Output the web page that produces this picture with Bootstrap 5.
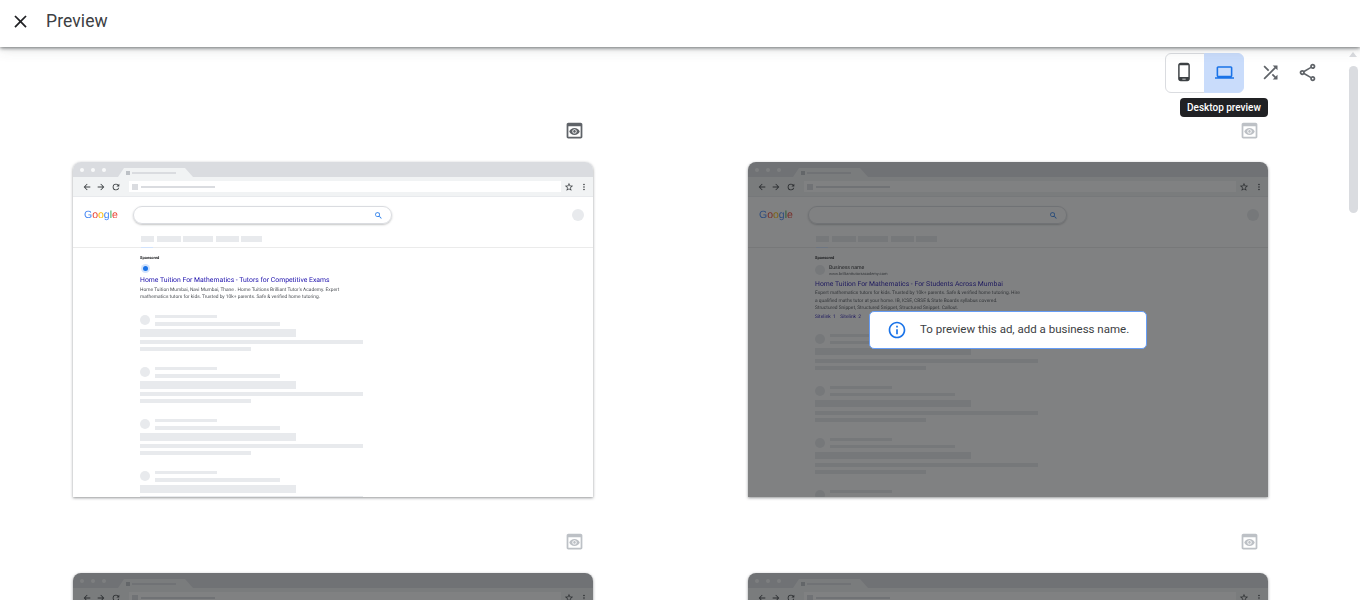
<!DOCTYPE html>
<html lang="en">

<head>
    <meta charset="UTF-8">
    <meta name="viewport" content="width=device-width, initial-scale=1.0">
    <title>Preview</title>
    <link href="https://cdn.jsdelivr.net/npm/bootstrap@5.3.0/dist/css/bootstrap.min.css" rel="stylesheet">
    <style>
        html, body { height: 100%; overflow: hidden; }
        body { font-family: Roboto, "Liberation Sans", sans-serif; background: #fff; color: #3c4043; }
        svg { display: block; fill: currentColor; }

        /* top bar */
        .top-bar { height: 47px; padding: 0 0 5px 10px; position: relative; z-index: 2; background: #fff;
            box-shadow: 0 1px 4px rgba(60, 64, 67, .75), 0 4px 12px rgba(60, 64, 67, .1); }
        .top-title { font-size: 17.5px; margin-left: 15px; color: #3c4043; letter-spacing: .1px; }
        .page-area { position: relative; height: 553px; overflow: hidden; }

        /* tools on the right */
        .tool-row { padding: 6px 35px 0 0; }
        .device-btn { width: 40px; height: 40px; padding: 0 2px 2px 0; color: #3c4043; border: 1px solid #dadce0; background: #fff; }
        .btn-group .device-btn.on { margin-left: 0; padding-right: 0; background: #c9dcfb; border-color: #c9dcfb; color: #1a73e8; }
        .tool-btn { width: 36px; height: 40px; padding: 0 0 2px; color: #5f6368; border: 0; background: none; }
        .tool-btn.first-tool { margin-left: 8px; margin-right: 1px; }
        .tool-tip { position: absolute; top: 51px; left: 1180px; height: 19px; padding: 0 7px; background: #202124;
            color: #fff; font-size: 10px; font-weight: 500; line-height: 19px; border-radius: 4px; white-space: nowrap; }
        .fake-scroll { position: absolute; left: 1349px; top: 19px; width: 9px; height: 147px; background: #dadce0; border-radius: 5px; }
        .fake-arrow { position: absolute; left: 1349px; top: 5px; width: 0; height: 0; border: 4px solid transparent;
            border-top: 0; border-bottom: 5px solid #dadce0; }

        /* grid of previews */
        .preview-grid { display: grid; grid-template-columns: 520px 520px; column-gap: 155px; row-gap: 36px; margin: 29px 0 0 73px; }
        .eye-row { height: 16px; margin-bottom: 24px; padding-right: 11px; color: #5f6368; }
        .eye-row.off { color: #bdc1c6; }
        .eye-row svg { width: 21px; height: 21px; margin: -2.5px -2.5px 0 0; }
        .browser { position: relative; height: 335px; overflow: hidden; background: #fff; border-radius: 8px 8px 0 0;
            box-shadow: 0 1px 3px rgba(60, 64, 67, .55); }
        .browser-inner { height: 100%; filter: blur(.25px); text-rendering: geometricPrecision; }
        .dim-layer { position: absolute; inset: 0; background: rgba(32, 33, 36, .57); }
        .ad-note { position: absolute; left: 121px; top: 149px; width: 278px; height: 38px; padding-left: 17px; background: #fff;
            border: 1px solid #669df6; border-radius: 5px; font-size: 11.5px; color: #3c4043; }
        .ad-note svg { width: 20px; height: 20px; color: #1a73e8; margin-right: 13px; }

        /* fake browser chrome */
        .tab-strip { height: 15px; background: #dadce0; padding-left: 7px; }
        .win-dot { width: 4px; height: 4px; border-radius: 50%; background: #f8f9fa; margin-right: 7px; }
        .tab-shape { width: 75px; height: 9px; margin: 6px 0 0 5px; background: #f1f3f4; padding-left: 8px;
            clip-path: polygon(0 100%, 6px 0, 67px 0, 100% 100%); }
        .tab-square { width: 4px; height: 4px; background: #bdc1c6; }
        .tab-line { width: 44px; height: 2px; margin-left: 2px; background: #dadce0; }
        .nav-strip { height: 20px; background: #f1f3f4; padding-left: 9px; color: #5f6368; border-bottom: 1px solid #e8eaed; }
        .nav-strip svg { width: 10px; height: 10px; color: #3c4043; margin-right: 4.5px; }
        .url-box { width: 433px; height: 11px; margin-left: 4px; margin-right: 3px; background: #fff; padding-left: 3px; }
        .url-square { width: 6px; height: 6px; background: #dadce0; }
        .url-line { width: 74px; height: 2px; margin-left: 3px; background: #dadce0; }
        .search-strip { padding: 9px 9px 0 11px; }
        .g-logo { width: 49px; font-family: "Liberation Sans", sans-serif; font-size: 10.5px; line-height: 18px; }
        .search-box { width: 259px; height: 18px; border: 1px solid #dadce0; border-radius: 9px; padding-right: 8px;
            box-shadow: 0 1px 2px rgba(60, 64, 67, .3); color: #1a73e8; }
        .search-box svg { width: 9px; height: 9px; }
        .round-dot { width: 12px; height: 12px; margin-top: 3px; border-radius: 50%; background: #e8eaed; }
        .tab-bars { position: relative; height: 12px; margin-top: 12px; padding-left: 68px; gap: 2.5px; border-bottom: 1px solid #ebebeb; }
        .tab-bars span { height: 6px; background: #e8eaed; display: block; }
        .tab-bars::after { content: ""; position: absolute; left: 68px; bottom: -1px; width: 12px; height: 1px; background: #d2e3fc; }

        /* results */
        .result-col { padding-left: 67px; }
        .spons { font-size: 4px; line-height: 5px; font-weight: 700; color: #202124; margin-top: 7px; }
        .fav-dot { width: 9px; height: 9px; margin: 4px 0 2px 1px; border-radius: 50%; background: #d2e3fc; padding: 2px; }
        .fav-dot i { display: block; width: 5px; height: 5px; border-radius: 50%; background: #1a73e8; }
        .ad-title { font-size: 6.85px; line-height: 10px; color: #1a0dab; white-space: nowrap; }
        .ad-desc { font-size: 4.85px; line-height: 7.2px; color: #4d5156; margin-top: 2px; white-space: nowrap; }
        .ad-desc.wider { line-height: 7.5px; margin-top: 1px; }
        .biz-row { margin: 4px 0 3px; height: 12px; }
        .biz-dot { width: 10px; height: 10px; margin-right: 4px; border-radius: 50%; background: #e8eaed; }
        .biz-name { font-size: 5.2px; line-height: 6px; color: #202124; }
        .biz-url { font-size: 4px; line-height: 5px; color: #4d5156; }
        .site-links { font-size: 4.9px; line-height: 8px; color: #1a0dab; word-spacing: 1px; }

        .skel-wrap { margin-top: 14px; }
        .skel-wrap.lower { margin-top: 13px; }
        .skel { margin-bottom: 16px; }
        .skel-dot { width: 10px; height: 10px; margin-right: 5px; border-radius: 50%; background: #e8eaed; }
        .skel-top { width: 62px; height: 3px; background: #e8eaed; margin-bottom: 4px; }
        .skel-sub { width: 125px; height: 3.5px; background: #e8eaed; }
        .skel-bar { width: 156px; height: 7.5px; margin-top: 3.5px; background: #e8eaed; }
        .skel-long { width: 223px; height: 4px; margin-top: 3.5px; background: #e8eaed; }
        .skel-short { width: 111px; height: 4px; margin-top: 3px; background: #e8eaed; }
    </style>
</head>

<body>
    <!-- top bar -->
    <div class="top-bar d-flex align-items-center">
        <svg width="21" height="21" viewBox="0 0 24 24" style="color:#202124"><path d="M19 6.41L17.59 5 12 10.59 6.41 5 5 6.41 10.59 12 5 17.59 6.41 19 12 13.41 17.59 19 19 17.59 13.41 12z"/></svg>
        <div class="top-title">Preview</div>
    </div>

    <div class="page-area">
        <div class="tool-row d-flex justify-content-end">
            <div class="btn-group" role="group">
                <button type="button" class="btn device-btn d-flex align-items-center justify-content-center">
                    <svg width="20" height="20" viewBox="0 0 24 24"><path d="M16 1H8C6.34 1 5 2.34 5 4v16c0 1.66 1.34 3 3 3h8c1.66 0 3-1.34 3-3V4c0-1.66-1.34-3-3-3zm-2 20h-4v-1h4v1zm3.25-3H6.75V4h10.5v14z"/></svg>
                </button>
                <button type="button" class="btn device-btn on d-flex align-items-center justify-content-center">
                    <svg width="19" height="19" viewBox="0 0 24 24"><path d="M20 18c1.1 0 1.99-.9 1.99-2L22 6c0-1.1-.9-2-2-2H4c-1.1 0-2 .9-2 2v10c0 1.1.9 2 2 2H0v2h24v-2h-4zM4 6h16v10H4V6z"/></svg>
                </button>
            </div>
            <button type="button" class="btn tool-btn first-tool d-flex align-items-center justify-content-center">
                <svg width="21" height="21" viewBox="0 0 24 24"><path d="M10.59 9.17L5.41 4 4 5.41l5.17 5.17 1.42-1.41zM14.5 4l2.04 2.04L4 18.59 5.41 20 17.96 7.46 20 9.5V4h-5.5zm.33 9.41l-1.41 1.41 3.13 3.13L14.5 20H20v-5.5l-2.04 2.04-3.13-3.13z"/></svg>
            </button>
            <button type="button" class="btn tool-btn d-flex align-items-center justify-content-center">
                <svg width="21" height="21" viewBox="0 0 24 24"><path d="M18 16.08c-.76 0-1.44.3-1.96.77L8.91 12.7c.05-.23.09-.46.09-.7s-.04-.47-.09-.7l7.05-4.11c.54.5 1.25.81 2.04.81 1.66 0 3-1.34 3-3s-1.34-3-3-3-3 1.34-3 3c0 .24.04.47.09.7L8.04 9.81C7.5 9.31 6.79 9 6 9c-1.66 0-3 1.34-3 3s1.34 3 3 3c.79 0 1.5-.31 2.04-.81l7.12 4.16c-.05.21-.08.43-.08.65 0 1.61 1.31 2.92 2.92 2.92 1.61 0 2.92-1.31 2.92-2.92s-1.31-2.92-2.92-2.92zM18 4c.55 0 1 .45 1 1s-.45 1-1 1-1-.45-1-1 .45-1 1-1zM6 13c-.55 0-1-.45-1-1s.45-1 1-1 1 .45 1 1-.45 1-1 1zm12 7.02c-.55 0-1-.45-1-1s.45-1 1-1 1 .45 1 1-.45 1-1 1z"/></svg>
            </button>
        </div>
        <div class="tool-tip">Desktop preview</div>
        <div class="fake-arrow"></div>
        <div class="fake-scroll"></div>

        <div class="preview-grid" id="preview-grid"></div>
    </div>

    <script>
        const eyeIcon = '<svg viewBox="0 0 24 24"><path d="M19 3H5c-1.1 0-2 .9-2 2v14c0 1.1.9 2 2 2h14c1.1 0 2-.9 2-2V5c0-1.1-.9-2-2-2zm0 16H5V7h14v12zm-5.5-6c0 .83-.67 1.5-1.5 1.5s-1.5-.67-1.5-1.5.67-1.5 1.5-1.5 1.5.67 1.5 1.5zM12 9c-2.73 0-5.06 1.66-6 4 .94 2.34 3.27 4 6 4s5.06-1.66 6-4c-.94-2.34-3.27-4-6-4zm0 6.5c-1.38 0-2.5-1.12-2.5-2.5s1.12-2.5 2.5-2.5 2.5 1.12 2.5 2.5-1.12 2.5-2.5 2.5z"/></svg>';

        // browser chrome shared by every preview
        const chromeTop = `
            <div class="tab-strip d-flex align-items-center">
                <span class="win-dot"></span><span class="win-dot"></span><span class="win-dot"></span>
                <div class="tab-shape d-flex align-items-center"><span class="tab-square"></span><span class="tab-line"></span></div>
            </div>
            <div class="nav-strip d-flex align-items-center">
                <svg viewBox="0 0 24 24"><path d="M20 11H7.83l5.59-5.59L12 4l-8 8 8 8 1.41-1.41L7.83 13H20z"/></svg>
                <svg viewBox="0 0 24 24"><path d="M12 4l-1.41 1.41L16.17 11H4v2h12.17l-5.58 5.59L12 20l8-8z"/></svg>
                <svg viewBox="0 0 24 24"><path d="M17.65 6.35A7.96 7.96 0 0 0 12 4a8 8 0 1 0 7.73 10h-2.08A6 6 0 1 1 12 6c1.66 0 3.14.69 4.22 1.78L13 11h7V4z"/></svg>
                <div class="url-box d-flex align-items-center"><span class="url-square"></span><span class="url-line"></span></div>
                <svg viewBox="0 0 24 24"><path d="M22 9.24l-7.19-.62L12 2 9.19 8.63 2 9.24l5.46 4.73L5.82 21 12 17.27 18.18 21l-1.63-7.03L22 9.24zM12 15.4l-3.76 2.27 1-4.28-3.32-2.88 4.38-.38L12 6.1l1.71 4.04 4.38.38-3.32 2.88 1 4.28L12 15.4z"/></svg>
                <svg viewBox="0 0 24 24"><path d="M12 8a2 2 0 1 0 0-4 2 2 0 0 0 0 4zm0 2a2 2 0 1 0 0 4 2 2 0 0 0 0-4zm0 6a2 2 0 1 0 0 4 2 2 0 0 0 0-4z"/></svg>
            </div>`;

        const searchArea = `
            <div class="search-strip d-flex">
                <div class="g-logo"><span style="color:#4285f4">G</span><span style="color:#ea4335">o</span><span style="color:#fbbc05">o</span><span style="color:#4285f4">g</span><span style="color:#34a853">l</span><span style="color:#ea4335">e</span></div>
                <div class="search-box d-flex align-items-center justify-content-end">
                    <svg viewBox="0 0 24 24"><path d="M15.5 14h-.79l-.28-.27A6.47 6.47 0 0 0 16 9.5 6.5 6.5 0 1 0 9.5 16c1.61 0 3.09-.59 4.23-1.57l.27.28v.79l5 4.99L20.49 19l-4.99-5zm-6 0C7.01 14 5 11.99 5 9.5S7.01 5 9.5 5 14 7.01 14 9.5 11.99 14 9.5 14z"/></svg>
                </div>
                <div class="round-dot ms-auto"></div>
            </div>
            <div class="tab-bars d-flex">
                <span style="width:13px"></span><span style="width:24px"></span><span style="width:30px"></span><span style="width:23px"></span><span style="width:21px"></span>
            </div>`;

        function skeletons(count, extraClass) {
            let html = `<div class="skel-wrap ${extraClass}">`;
            for (let i = 0; i < count; i++) {
                html += `
                <div class="skel">
                    <div class="d-flex">
                        <div class="skel-dot"></div>
                        <div><div class="skel-top"></div><div class="skel-sub"></div></div>
                    </div>
                    <div class="skel-bar"></div><div class="skel-long"></div><div class="skel-short"></div>
                </div>`;
            }
            return html + '</div>';
        }

        const adOne = `
            <div class="spons">Sponsored</div>
            <div class="fav-dot"><i></i></div>
            <div class="ad-title">Home Tuition For Mathematics - Tutors for Competitive Exams</div>
            <div class="ad-desc">Home Tuition Mumbai, Navi Mumbai, Thane . Home Tuitions Brilliant Tutor's Academy. Expert<br>mathematics tutors for kids. Trusted by 10k+ parents. Safe &amp; verified home tutoring.</div>
            ${skeletons(4, '')}`;

        const adTwo = `
            <div class="spons">Sponsored</div>
            <div class="biz-row d-flex align-items-center">
                <div class="biz-dot"></div>
                <div><div class="biz-name">Business name</div><div class="biz-url">www.brillianttutorsacademy.com</div></div>
            </div>
            <div class="ad-title">Home Tuition For Mathematics - For Students Across Mumbai</div>
            <div class="ad-desc wider">Expert mathematics tutors for kids. Trusted by 10k+ parents. Safe &amp; verified home tutoring. Hire<br>a qualified maths tutor at your home. IB, ICSE, CBSE &amp; State Boards syllabus covered.<br>Structured Snippet, Structured Snippet, Structured Snippet. Callout.</div>
            <div class="site-links">Sitelink 1 &nbsp;Sitelink 2</div>
            ${skeletons(4, 'lower')}`;

        const note = `
            <div class="ad-note d-flex align-items-center">
                <svg viewBox="0 0 24 24"><path d="M11 7h2v2h-2zm0 4h2v6h-2zm1-9C6.48 2 2 6.48 2 12s4.48 10 10 10 10-4.48 10-10S17.52 2 12 2zm0 18c-4.41 0-8-3.59-8-8s3.59-8 8-8 8 3.59 8 8-3.59 8-8 8z"/></svg>
                <span>To preview this ad, add a business name.</span>
            </div>`;

        // the lower row is only visible down to its address bar
        const previews = [
            { body: searchArea + `<div class="result-col">${adOne}</div>`, dim: false, note: false },
            { body: searchArea + `<div class="result-col">${adTwo}</div>`, dim: true, note: true },
            { body: '', dim: true, note: false },
            { body: '', dim: true, note: false }
        ];

        document.getElementById('preview-grid').innerHTML = previews.map(p => `
            <div>
                <div class="eye-row d-flex justify-content-end ${p.dim ? 'off' : ''}">${eyeIcon}</div>
                <div class="browser">
                    <div class="browser-inner">${chromeTop}${p.body}</div>
                    ${p.dim ? '<div class="dim-layer"></div>' : ''}
                    ${p.note ? note : ''}
                </div>
            </div>`).join('');
    </script>
    <script src="https://cdn.jsdelivr.net/npm/bootstrap@5.3.0/dist/js/bootstrap.bundle.min.js"></script>
</body>

</html>
